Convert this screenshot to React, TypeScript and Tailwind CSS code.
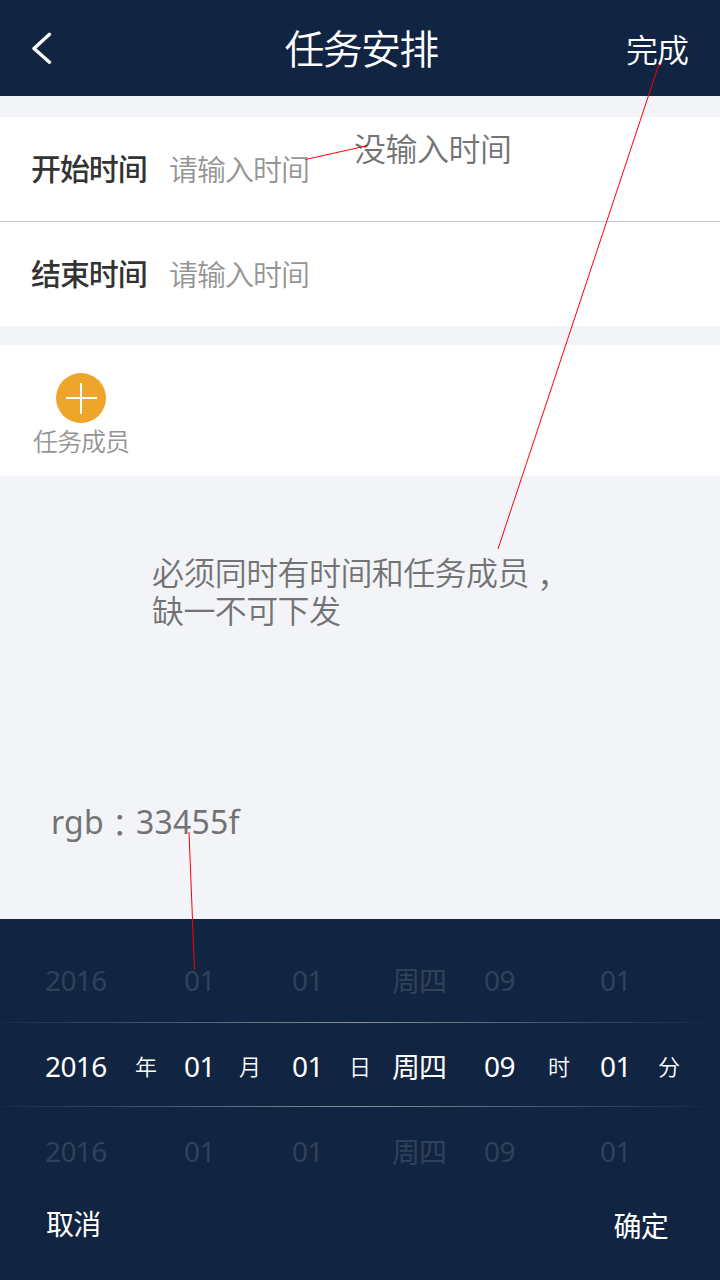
import type { ReactNode } from 'react';

const DIGITS = "font-['Noto_Sans','Noto_Sans_CJK_SC',sans-serif]";
const CENTERED_PUNCTUATION = "font-['Noto_Sans_CJK_TC',sans-serif] leading-none font-[350]";

function Field({ label, className }: { label: string; className: string }) {
  return (
    <label className={`flex items-center px-[31px] pb-[3px] ${className}`}>
      <span className="w-[138px] text-[30px] font-medium tracking-[-1.1px] text-[#333]">{label}</span>
      <span className="pt-0.5 text-[29px] font-[350] tracking-[-1px] text-[#949494]">请输入时间</span>
    </label>
  );
}

function PickerRow({ active = false, className }: { active?: boolean; className: string }) {
  const values: [string, string][] = [
    ['2016', '年'],
    ['01', '月'],
    ['01', '日'],
    ['周四', ''],
    ['09', '时'],
    ['01', '分'],
  ];
  const cells: ReactNode[] = [];
  values.forEach(([value, unit], i) => {
    const cjk = value === '周四';
    cells.push(
      <span key={`v${i}`} className={cjk ? 'text-[28px] leading-10 tracking-[-1px]' : `text-[28px] leading-10 tracking-[-0.6px] ${DIGITS}`}>
        {value}
      </span>,
    );
    if (!cjk) {
      cells.push(
        <span key={`u${i}`} className="pb-px text-[22px] leading-10 font-[350]">
          {active ? unit : ''}
        </span>,
      );
    }
  });
  return (
    <div
      className={`grid grid-cols-[90px_49px_55px_53px_57px_43px_92px_64px_52px_58px_1fr] items-center pl-[45px] ${
        active ? 'text-white' : 'text-[#314159]'
      } ${className}`}
    >
      {cells}
    </div>
  );
}

function Divider() {
  return <div className="h-px bg-linear-to-r from-[#182a46] via-[#8b929b] to-[#112441]" />;
}

export default function App() {
  return (
    <div
      lang="zh-CN"
      className="relative flex h-[1280px] w-[720px] flex-col overflow-hidden bg-[#f2f4f8] font-['Noto_Sans_CJK_SC',sans-serif] whitespace-nowrap"
    >
      <header className="grid h-24 shrink-0 grid-cols-[1fr_auto_1fr] items-center bg-[#112441] text-white">
        <svg className="ml-8 h-8 w-5" viewBox="0 0 20 32" fill="none" stroke="currentColor" strokeWidth="3.4">
          <path d="M17.500 2.300 2 16.500 17.500 30.200" strokeLinecap="round" strokeLinejoin="round" />
        </svg>
        <h1 className="pb-[3px] pl-0.5 text-[40px] leading-[88px] font-[350] tracking-[-1.7px]">任务安排</h1>
        <button className="justify-self-end pr-8 pb-px text-[32px] leading-[88px] font-[350] tracking-[-1px]">完成</button>
      </header>

      <section className="mt-[21px] h-[209px] shrink-0 bg-white">
        <Field label="开始时间" className="h-[105px] border-b border-[#c8c8c8]" />
        <Field label="结束时间" className="h-[104px]" />
      </section>

      <section className="mt-[19px] flex h-[131px] shrink-0 flex-col items-start bg-white pt-7 pl-[33px]">
        <button className="ml-[23px] flex size-[50px] items-center justify-center rounded-full bg-[#eda52a]">
          <svg className="size-[31px]" viewBox="0 0 31 31" stroke="#fff" strokeWidth="2">
            <path d="M0 15h31M15 0v31" />
          </svg>
        </button>
        <span className="text-[25px] leading-[35px] font-[350] tracking-[-1px] text-[#949494]">任务成员</span>
      </section>

      <main className="flex h-[443px] shrink-0 flex-col items-start text-[32px] text-[#737373]">
        <div className="mt-[76px] ml-[152px] leading-[38px] font-[350] tracking-[-0.6px]">
          <p className="flex h-[38px] items-start">
            必须同时有时间和任务成员
            <span className={`mt-[15px] ${CENTERED_PUNCTUATION}`}>，</span>
          </p>
          <p>缺一不可下发</p>
        </div>
        <p className={`mt-[175px] ml-[51px] flex items-center leading-[38px] tracking-[0.2px] ${DIGITS}`}>
          rgb<span className={`pt-px ${CENTERED_PUNCTUATION}`}>：</span>33455f
        </p>
      </main>

      <section className="flex flex-1 flex-col bg-[#112441]">
        <PickerRow className="h-[103px] pt-[18px]" />
        <Divider />
        <PickerRow active className="h-[83px] pt-0.5" />
        <Divider />
        <PickerRow className="h-[88px]" />
        <footer className="flex items-start justify-between pr-[52px] pl-[46px] text-[28px] leading-[54px] tracking-[-0.8px] text-white">
          <button className="pt-px">取消</button>
          <button className="pt-[3px]">确定</button>
        </footer>
      </section>

      <p className="absolute top-[128px] left-[354px] text-[32px] leading-[38px] font-[350] tracking-[-0.5px] text-[#737373]">
        没输入时间
      </p>
      <svg className="pointer-events-none absolute inset-0 h-[1280px] w-[720px]" viewBox="0 0 720 1280" stroke="#f00" strokeWidth="1">
        <path d="M305.500 159.500 368 145.500M659 64 498 549M189 832 194.500 970" fill="none" />
      </svg>
    </div>
  );
}
